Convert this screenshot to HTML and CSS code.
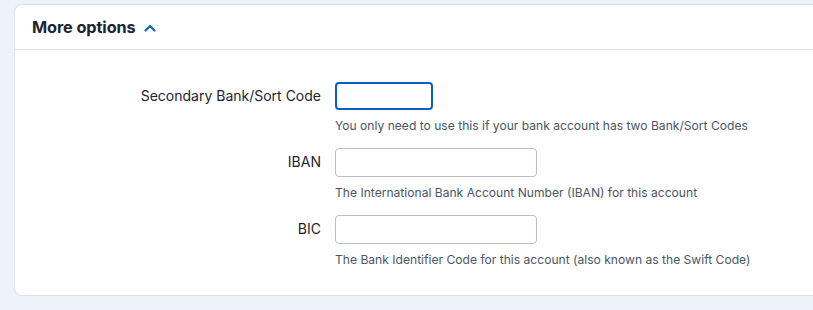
FILE: index.html
```html
<!DOCTYPE html>
<html>
<head>
<meta charset="utf-8">
<link rel="stylesheet" href="styles.css">
</head>
<body>
<div class="page">
  <section class="card">
    <header class="card-header">
      <h2 class="card-title">More options</h2>
      <svg class="chevron" width="12" height="8" viewBox="0 0 12 8"><path d="M1.5 6.5 L6 2 L10.5 6.5" fill="none" stroke="#0b63c4" stroke-width="2.2" stroke-linecap="round" stroke-linejoin="round"/></svg>
    </header>
    <div class="card-body">
      <div class="field">
        <label class="field-label">Secondary Bank/Sort Code</label>
        <div class="field-control">
          <input class="input input-short input-focus" type="text">
          <p class="help">You only need to use this if your bank account has two Bank/Sort Codes</p>
        </div>
      </div>
      <div class="field">
        <label class="field-label">IBAN</label>
        <div class="field-control">
          <input class="input" type="text">
          <p class="help">The International Bank Account Number (IBAN) for this account</p>
        </div>
      </div>
      <div class="field">
        <label class="field-label">BIC</label>
        <div class="field-control">
          <input class="input" type="text">
          <p class="help">The Bank Identifier Code for this account (also known as the Swift Code)</p>
        </div>
      </div>
    </div>
  </section>
</div>
</body>
</html>
```

FILE: styles.css
```css
html, body {
  margin: 0;
  padding: 0;
  background: #eef3fa;
  overflow: hidden;
  font-family: Inter, "Noto Sans", sans-serif;
}
.page {
  padding: 4px 0 0 14px;
  height: 310px;
  box-sizing: border-box;
  overflow: hidden;
}
.card {
  background: #fff;
  border: 1px solid #dde2ea;
  border-right: none;
  border-radius: 8px 0 0 8px;
  height: 292px;
  box-sizing: border-box;
}
.card-header {
  display: flex;
  align-items: center;
  height: 44px;
  padding-left: 17px;
  border-bottom: 1px solid #dde2ea;
}
.card-title {
  margin: 0;
  font-size: 16.3px;
  font-weight: 700;
  color: #1c2431;
  letter-spacing: -0.1px;
}
.chevron {
  margin-left: 8px;
  margin-top: 1px;
}
.card-body {
  padding-top: 32px;
  display: flex;
  flex-direction: column;
  gap: 14px;
}
.field {
  display: grid;
  grid-template-columns: 306px 1fr;
  column-gap: 14px;
}
.field-label {
  text-align: right;
  font-size: 14px;
  color: #1c2431;
  line-height: 28px;
}
.field-control {
  display: flex;
  flex-direction: column;
  align-items: flex-start;
}
.input {
  width: 202px;
  height: 29px;
  box-sizing: border-box;
  border: 1px solid #b9bec7;
  border-radius: 4px;
  margin: 0;
  padding: 0 8px;
  background: #fff;
  outline: none;
}
.input-short {
  width: 98px;
  height: 28px;
}
.input-focus {
  border: 2px solid #0b5fc0;
}
.help {
  margin: 8px 0 0;
  font-size: 12.1px;
  line-height: 16px;
  color: #4b5563;
}
```
